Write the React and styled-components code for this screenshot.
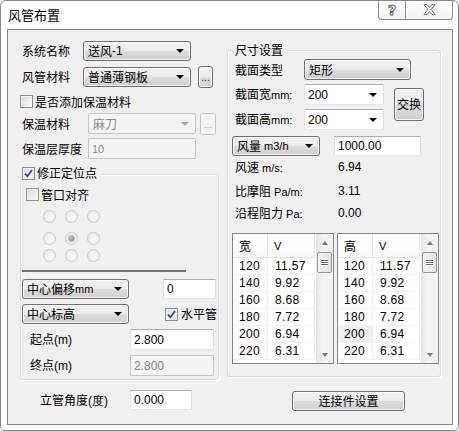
import React from "react";
import styled, { createGlobalStyle, css } from "styled-components";

const GlobalStyle = createGlobalStyle`
  html, body { margin: 0; padding: 0; background: #fff; }
  body {
    font-family: "Noto Sans CJK SC", "Liberation Sans", sans-serif;
    font-size: 12px;
    color: #000;
  }
  * { box-sizing: border-box; }
`;

const Window = styled.div`
  width: 459px;
  height: 431px;
  border: 1px solid #8a8a8a;
  border-radius: 6px 6px 5px 5px;
  background: #fff;
  display: flex;
  flex-direction: column;
  overflow: hidden;
`;

const TitleBar = styled.div`
  height: 28px;
  flex-shrink: 0;
  display: flex;
  align-items: flex-start;
`;

const Title = styled.div`
  margin: 6px 0 0 7px;
  font-size: 13px;
  line-height: 16px;
`;

const Caption = styled.div`
  margin: -1px 5px 0 auto;
  display: flex;
  height: 20px;
`;

const CaptionButton = styled.div`
  width: ${(p) => p.$w}px;
  height: 20px;
  border: 1px solid #8c8c8c;
  border-top: none;
  ${(p) => (p.$first ? "border-radius: 0 0 0 4px; border-right: none;" : "border-radius: 0 0 4px 0;")}
  background: linear-gradient(#ffffff, #f4f4f4);
  display: flex;
  align-items: center;
  justify-content: center;
`;

const HelpGlyph = styled.span`
  font-family: "DejaVu Sans", sans-serif;
  font-weight: bold;
  font-size: 14px;
  line-height: 14px;
  color: #fff;
  -webkit-text-stroke: 1px #6a6a6a;
`;

const Client = styled.div`
  flex: 1;
  margin: 0 5px 5px 6px;
  border: 1px solid #838383;
  background: #f0f0f0;
  display: flex;
`;

const LeftCol = styled.div`
  width: 214px;
  flex-shrink: 0;
  display: flex;
  flex-direction: column;
  padding-top: 11px;
`;

const RightCol = styled.div`
  flex: 1;
  display: flex;
  flex-direction: column;
`;

const Row = styled.div`
  display: flex;
  align-items: center;
  height: ${(p) => p.$h || 20}px;
  margin-top: ${(p) => p.$mt || 0}px;
  padding-left: ${(p) => p.$pl || 0}px;
  flex-shrink: 0;
`;

const Label = styled.span`
  width: ${(p) => (p.$w ? `${p.$w}px` : "auto")};
  flex-shrink: 0;
  white-space: nowrap;
  line-height: 16px;
`;

const Small = styled.span`
  font-family: "Liberation Sans", sans-serif;
  font-size: 11px;
`;

const btnGradient = css`
  border: 1px solid #707070;
  border-radius: 3px;
  background: linear-gradient(#f2f2f2 0%, #ebebeb 48%, #dddddd 52%, #cfcfcf 100%);
  box-shadow: inset 0 0 0 1px rgba(255, 255, 255, 0.75);
`;

const ComboBox = styled.div`
  width: ${(p) => p.$w}px;
  height: ${(p) => p.$h || 20}px;
  margin-left: ${(p) => p.$ml || 0}px;
  flex-shrink: 0;
  display: flex;
  align-items: center;
  padding-left: 4px;
  white-space: nowrap;
  line-height: 16px;
  ${btnGradient}
  ${(p) =>
    p.$editable &&
    css`
      border-color: #abadb3 #dbdfe6 #e3e9ef #e2e3ea;
      border-radius: 2px;
      background: #fff;
      box-shadow: none;
      padding-left: 3px;
    `}
  ${(p) =>
    p.$disabled &&
    css`
      border-color: #c4c7c9;
      background: #f4f4f4;
      box-shadow: none;
      color: #8a8a8a;
      border-radius: 2px;
    `}
`;

const Arrow = styled.span`
  margin-left: auto;
  margin-right: 6px;
  width: 0;
  height: 0;
  border-left: 4px solid transparent;
  border-right: 4px solid transparent;
  border-top: 4px solid ${(p) => (p.$disabled ? "#a8a8a8" : "#000")};
`;

const NumText = styled.span`
  font-family: "Liberation Sans", sans-serif;
  font-size: 12px;
`;

const TextBox = styled.input`
  width: ${(p) => p.$w}px;
  height: ${(p) => p.$h || 20}px;
  margin-left: ${(p) => p.$ml || 0}px;
  flex-shrink: 0;
  border: 1px solid;
  border-color: #abadb3 #dbdfe6 #e3e9ef #e2e3ea;
  border-radius: 1px;
  background: #fff;
  padding: 0 0 0 3px;
  font-family: "Liberation Sans", sans-serif;
  font-size: ${(p) => p.$fs || 12}px;
  color: #000;
  outline: none;
  ${(p) =>
    p.disabled &&
    css`
      background: #f4f4f4;
      border-color: #c4c7c9;
      color: #8a8a8a;
    `}
`;

const DotsButton = styled.div`
  width: ${(p) => p.$w || 15}px;
  height: 22px;
  margin-left: ${(p) => p.$ml || 0}px;
  flex-shrink: 0;
  display: flex;
  align-items: flex-end;
  justify-content: center;
  padding-bottom: 5px;
  font-family: "Liberation Sans", sans-serif;
  font-size: 10px;
  line-height: 8px;
  color: #1a1a6e;
  ${btnGradient}
  ${(p) =>
    p.$disabled &&
    css`
      border-color: #c4c7c9;
      background: #f4f4f4;
      box-shadow: none;
      color: #a0a0a0;
    `}
`;

const PushButton = styled.div`
  width: ${(p) => p.$w}px;
  height: ${(p) => p.$h}px;
  margin-left: ${(p) => p.$ml || 0}px;
  margin-top: ${(p) => p.$mt || 0}px;
  flex-shrink: 0;
  display: flex;
  align-items: center;
  justify-content: center;
  line-height: 16px;
  ${btnGradient}
`;

const CheckBoxBox = styled.span`
  width: 13px;
  height: 13px;
  flex-shrink: 0;
  border: 1px solid #8f8f8f;
  background: linear-gradient(135deg, #dcdcdc, #fbfbfb);
  box-shadow: inset 0 0 0 1px #f4f4f4;
  display: flex;
  align-items: center;
  justify-content: center;
  margin-right: ${(p) => p.$gap ?? 2}px;
`;

const CheckLabel = styled.label`
  display: flex;
  align-items: center;
  margin-left: ${(p) => p.$ml || 0}px;
  white-space: nowrap;
  line-height: 16px;
`;

function CheckBox({ checked, children, ml, gap }) {
  return (
    <CheckLabel $ml={ml}>
      <CheckBoxBox $gap={gap}>
        {checked && (
          <svg width="9" height="9" viewBox="0 0 9 9">
            <path d="M1 4.6 L3.4 7.2 L8 1" fill="none" stroke="#2a4a93" strokeWidth="1.8" />
          </svg>
        )}
      </CheckBoxBox>
      {children}
    </CheckLabel>
  );
}

const GroupBox = styled.div`
  margin-left: ${(p) => p.$ml}px;
  margin-top: ${(p) => p.$mt}px;
  width: ${(p) => p.$w}px;
  height: ${(p) => p.$h}px;
  flex-shrink: 0;
  border: 1px solid #d5dfe5;
  border-radius: 3px;
  box-shadow: inset 1px 1px 0 #fff, 1px 1px 0 #fff;
  display: flex;
  flex-direction: column;
`;

const Legend = styled.div`
  align-self: flex-start;
  margin-top: ${(p) => p.$mt}px;
  margin-left: ${(p) => p.$ml}px;
  padding: 0 4px 0 ${(p) => p.$pl || 0}px;
  background: #f0f0f0;
  display: flex;
  align-items: center;
  height: ${(p) => p.$h || 16}px;
  line-height: 16px;
  flex-shrink: 0;
`;

const RadioGrid = styled.div`
  display: grid;
  grid-template-columns: 12px 12px 12px;
  grid-template-rows: 22px 17px 12px;
  column-gap: 10px;
  margin: 9px 0 0 22px;
  flex-shrink: 0;
`;

const Radio = styled.span`
  width: 13px;
  height: 13px;
  border-radius: 50%;
  border: 1px solid #c9c9c9;
  background: radial-gradient(circle at 60% 65%, #f8f8f8, #e6e6e6);
  display: flex;
  align-items: center;
  justify-content: center;
  &::after {
    content: "";
    display: ${(p) => (p.$on ? "block" : "none")};
    width: 5px;
    height: 5px;
    border-radius: 50%;
    background: radial-gradient(circle at 40% 35%, #c8c8c8, #7a7a7a);
    box-shadow: 0 0 0 1px #b8b8b8;
  }
`;

const Separator = styled.div`
  margin: 9px 0 0 1px;
  width: 164px;
  height: 2px;
  background: #767676;
  flex-shrink: 0;
`;

const Value = styled.span`
  font-family: "Liberation Sans", sans-serif;
  font-size: 12px;
`;

const ListsRow = styled.div`
  display: flex;
  gap: 3px;
  margin: 12px 0 0 4px;
  flex-shrink: 0;
`;

const ListFrame = styled.div`
  width: 102px;
  height: 131px;
  border: 1px solid #828790;
  background: #fff;
  display: flex;
  overflow: hidden;
`;

const ListTable = styled.div`
  width: 82px;
  display: flex;
  flex-direction: column;
`;

const ListHeader = styled.div`
  display: grid;
  grid-template-columns: 35px 47px;
  height: 24px;
  flex-shrink: 0;
  border-bottom: 1px solid #e5e5e5;
  background: linear-gradient(#ffffff, #fafafa);
`;

const HeadCell = styled.div`
  display: flex;
  align-items: center;
  padding-left: ${(p) => p.$pl}px;
  border-right: 1px solid #e5e5e5;
  font-size: ${(p) => p.$fs || 12}px;
  font-family: ${(p) => (p.$latin ? '"Liberation Sans", sans-serif' : "inherit")};
`;

const ListRow = styled.div`
  display: grid;
  grid-template-columns: 35px 47px;
  height: 17px;
  flex-shrink: 0;
`;

const Cell = styled.div`
  display: flex;
  align-items: center;
  padding-left: ${(p) => p.$pl}px;
  font-family: "Liberation Sans", sans-serif;
  font-size: 12px;
  letter-spacing: 0.3px;
  border-right: 1px solid #f0f0f0;
  border-bottom: 1px solid #f3f3f3;
  background: ${(p) => (p.$sel ? "#f0f0f0" : "#fff")};
`;

const ScrollBar = styled.div`
  width: 17px;
  margin-left: auto;
  background: linear-gradient(90deg, #e6e6e6, #f3f3f3 40%, #f3f3f3);
  display: flex;
  flex-direction: column;
`;

const ScrollArrow = styled.div`
  height: 17px;
  flex-shrink: 0;
  display: flex;
  align-items: center;
  justify-content: center;
  &::before {
    content: "";
    width: 0;
    height: 0;
    border-left: 3.5px solid transparent;
    border-right: 3.5px solid transparent;
    ${(p) => (p.$down ? "border-top: 4px solid #7a7a7a;" : "border-bottom: 4px solid #7a7a7a;")}
  }
`;

const Thumb = styled.div`
  margin: 1px 1px 0 1px;
  height: 21px;
  flex-shrink: 0;
  border: 1px solid #959595;
  border-radius: 2px;
  background: linear-gradient(90deg, #f4f4f4, #e2e2e2);
  display: flex;
  flex-direction: column;
  align-items: center;
  justify-content: center;
  gap: 1px;
`;

const Grip = styled.span`
  width: 7px;
  height: 1px;
  background: #6a6a6a;
  box-shadow: 0 1px 0 #fff;
`;

const Spacer = styled.div`
  flex: 1;
`;

const rows = [
  ["120", "11.57"],
  ["140", "9.92"],
  ["160", "8.68"],
  ["180", "7.72"],
  ["200", "6.94"],
  ["220", "6.31"],
];

function SizeList({ title, selRow }) {
  return (
    <ListFrame>
      <ListTable>
        <ListHeader>
          <HeadCell $pl={6}>{title}</HeadCell>
          <HeadCell $pl={6} $latin $fs={11}>V</HeadCell>
        </ListHeader>
        {rows.map((r, i) => (
          <ListRow key={r[0]}>
            <Cell $pl={6} $sel={i === selRow}>{r[0]}</Cell>
            <Cell $pl={7}>{r[1]}</Cell>
          </ListRow>
        ))}
      </ListTable>
      <ScrollBar>
        <ScrollArrow />
        <Thumb>
          <Grip />
          <Grip />
          <Grip />
        </Thumb>
        <Spacer />
        <ScrollArrow $down />
      </ScrollBar>
    </ListFrame>
  );
}

export default function App() {
  return (
    <>
      <GlobalStyle />
      <Window>
        <TitleBar>
          <Title>风管布置</Title>
          <Caption>
            <CaptionButton $w={27} $first>
              <HelpGlyph>?</HelpGlyph>
            </CaptionButton>
            <CaptionButton $w={48}>
              <svg width="13" height="11" viewBox="0 0 13 11">
                <path
                  d="M1 0.5 H4 L6.5 3.5 L9 0.5 H12 L8.2 5.5 L12 10.5 H9 L6.5 7.5 L4 10.5 H1 L4.8 5.5 Z"
                  fill="#fff"
                  stroke="#6a6a6a"
                  strokeWidth="1"
                />
              </svg>
            </CaptionButton>
          </Caption>
        </TitleBar>
        <Client>
          <LeftCol>
            <Row $pl={14}>
              <Label $w={61}>系统名称</Label>
              <ComboBox $w={108}>
                送风<NumText>-1</NumText>
                <Arrow />
              </ComboBox>
            </Row>
            <Row $pl={14} $mt={5} $h={21}>
              <Label $w={61}>风管材料</Label>
              <ComboBox $w={108}>
                普通薄钢板
                <Arrow />
              </ComboBox>
              <DotsButton $ml={7}>...</DotsButton>
            </Row>
            <Row $pl={12} $mt={8} $h={13}>
              <CheckBox gap={2}>是否添加保温材料</CheckBox>
            </Row>
            <Row $pl={14} $mt={5} $h={21}>
              <Label $w={66}>保温材料</Label>
              <ComboBox $w={108} $h={21} $disabled>
                麻刀
                <Arrow $disabled />
              </ComboBox>
              <DotsButton $ml={4} $w={16} $disabled>...</DotsButton>
            </Row>
            <Row $pl={14} $mt={4} $h={21}>
              <Label $w={66}>保温层厚度</Label>
              <TextBox $w={108} $h={21} $fs={11} disabled defaultValue="10" />
            </Row>
            <GroupBox $ml={12} $mt={15} $w={199} $h={206}>
              <Legend $mt={-9} $ml={0} $pl={1} $h={14}>
                <CheckBox checked gap={2}>修正定位点</CheckBox>
              </Legend>
              <Row $pl={5} $mt={8} $h={13}>
                <CheckBox gap={2}>管口对齐</CheckBox>
              </Row>
              <RadioGrid>
                {[0, 1, 2, 3, 4, 5, 6, 7, 8].map((i) => (
                  <Radio key={i} $on={i === 4} />
                ))}
              </RadioGrid>
              <Separator />
              <Row $pl={1} $mt={7}>
                <ComboBox $w={107}>
                  中心偏移<Small>mm</Small>
                  <Arrow />
                </ComboBox>
                <TextBox $w={53} $ml={34} defaultValue="0" />
              </Row>
              <Row $pl={1} $mt={5}>
                <ComboBox $w={107}>
                  中心标高
                  <Arrow />
                </ComboBox>
                <CheckBox checked ml={36} gap={3}>水平管</CheckBox>
              </Row>
              <Row $pl={9} $mt={5} $h={21}>
                <Label $w={100}>
                  起点<NumText>(m)</NumText>
                </Label>
                <TextBox $w={84} $h={21} defaultValue="2.800" />
              </Row>
              <Row $pl={9} $mt={5} $h={21}>
                <Label $w={100}>
                  终点<NumText>(m)</NumText>
                </Label>
                <TextBox $w={84} $h={21} disabled defaultValue="2.800" />
              </Row>
            </GroupBox>
            <Row $pl={32} $mt={10}>
              <Label $w={90}>
                立管角度<NumText>(度)</NumText>
              </Label>
              <TextBox $w={62} defaultValue="0.000" />
            </Row>
          </LeftCol>
          <RightCol>
            <GroupBox $ml={5} $mt={20} $w={214} $h={327}>
              <Legend $mt={-9} $ml={5} $pl={2}>
                尺寸设置
              </Legend>
              <Row $pl={7} $mt={1} $h={21}>
                <Label $w={69}>截面类型</Label>
                <ComboBox $w={107} $h={21}>
                  矩形
                  <Arrow />
                </ComboBox>
              </Row>
              <Row $h={46} $mt={4}>
                <div>
                  <Row $pl={7} $h={21}>
                    <Label $w={69}>
                      截面宽<Small>mm:</Small>
                    </Label>
                    <ComboBox $w={80} $h={21} $editable>
                      <NumText>200</NumText>
                      <Arrow />
                    </ComboBox>
                  </Row>
                  <Row $pl={7} $h={21} $mt={4}>
                    <Label $w={69}>
                      截面高<Small>mm:</Small>
                    </Label>
                    <ComboBox $w={80} $h={21} $editable>
                      <NumText>200</NumText>
                      <Arrow />
                    </ComboBox>
                  </Row>
                </div>
                <PushButton $w={30} $h={33} $ml={10} $mt={-6}>
                  交换
                </PushButton>
              </Row>
              <Row $pl={4} $mt={6}>
                <ComboBox $w={88}>
                  风量<Small>&nbsp;m3/h</Small>
                  <Arrow />
                </ComboBox>
                <TextBox $w={87} $ml={14} defaultValue="1000.00" />
              </Row>
              <Row $pl={7} $mt={3} $h={16}>
                <Label $w={103}>
                  风速<Small> m/s:</Small>
                </Label>
                <Value>6.94</Value>
              </Row>
              <Row $pl={7} $mt={8} $h={16}>
                <Label $w={103}>
                  比摩阻<Small> Pa/m:</Small>
                </Label>
                <Value>3.11</Value>
              </Row>
              <Row $pl={7} $mt={6} $h={16}>
                <Label $w={103}>
                  沿程阻力<Small> Pa:</Small>
                </Label>
                <Value>0.00</Value>
              </Row>
              <ListsRow>
                <SizeList title="宽" selRow={-1} />
                <SizeList title="高" selRow={4} />
              </ListsRow>
            </GroupBox>
            <PushButton $w={113} $h={20} $ml={70} $mt={14}>
              连接件设置
            </PushButton>
          </RightCol>
        </Client>
      </Window>
    </>
  );
}
